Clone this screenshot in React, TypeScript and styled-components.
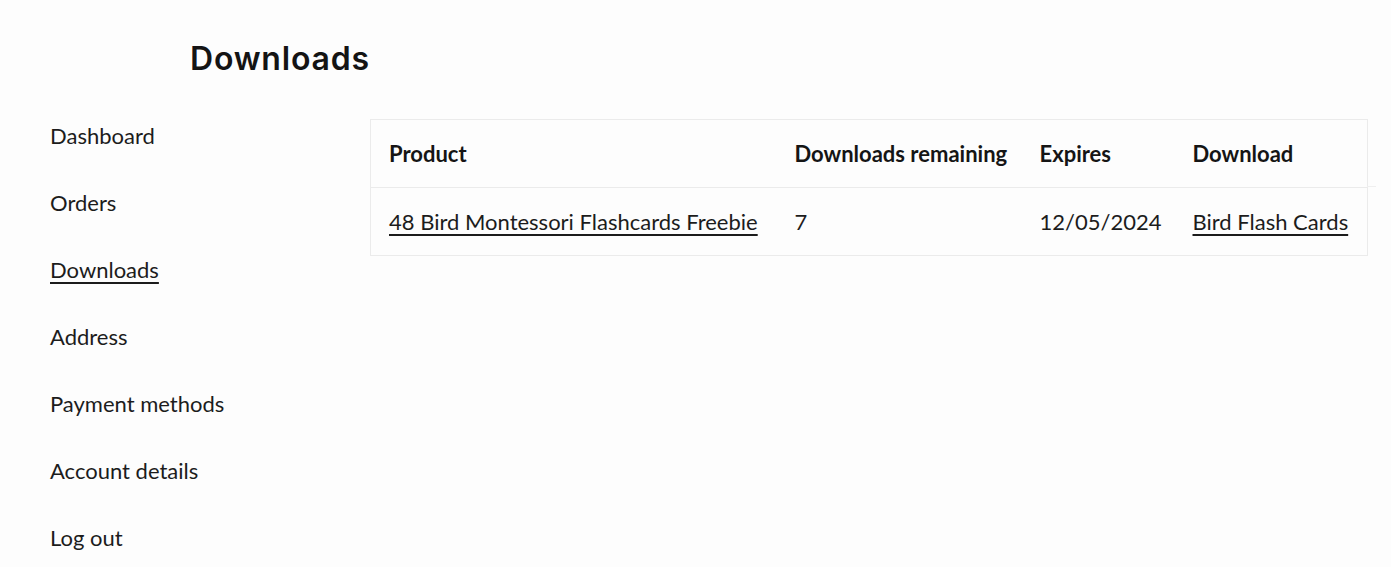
import React from "react";
import styled, { createGlobalStyle } from "styled-components";

const GlobalStyle = createGlobalStyle`
  html, body {
    margin: 0;
    padding: 0;
    background: #fdfdfd;
    color: #1c1c1c;
    font-family: Lato, "Open Sans", Arial, sans-serif;
  }
`;

const Page = styled.div`
  padding: 42px 24px 0 50px;
  width: 1391px;
  box-sizing: border-box;
`;

const Title = styled.h1`
  margin: 0 0 0 140px;
  font-family: Inter, "Noto Sans", sans-serif;
  font-weight: 600;
  font-size: 32px;
  line-height: 34px;
  letter-spacing: 0.8px;
  color: #141414;
`;

const Main = styled.div`
  display: flex;
  margin-top: 26px;
`;

const Sidebar = styled.nav`
  width: 320px;
  flex: none;
  display: flex;
  flex-direction: column;
`;

const NavItem = styled.a<{ $active?: boolean }>`
  display: block;
  font-size: 22px;
  line-height: 33px;
  padding: 17px 0;
  color: #1c1c1c;
  text-decoration: ${(p) => (p.$active ? "underline" : "none")};
  text-underline-offset: 4px;
  text-decoration-thickness: 1.5px;
`;

const Content = styled.div`
  flex: 1;
  padding-top: 17px;
`;

const TableWrap = styled.div`
  position: relative;
  width: 997px;
`;

const HeaderExtension = styled.div`
  position: absolute;
  left: 100%;
  top: 67px;
  width: 9px;
  height: 1px;
  background: #efefef;
`;

const Table = styled.table`
  width: 997px;
  table-layout: fixed;
  border-collapse: collapse;
  border: 1px solid #ebebeb;
  font-size: 22px;
`;

const HeadCell = styled.th`
  text-align: left;
  font-weight: 700;
  padding: 17px 18px;
  line-height: 33px;
  color: #151515;
  border-bottom: 1px solid #ebebeb;
  white-space: nowrap;
`;

const Cell = styled.td`
  padding: 17px 18px;
  line-height: 33px;
  color: #1c1c1c;
  white-space: nowrap;
`;

const Link = styled.a`
  color: #1c1c1c;
  text-decoration: underline;
  text-underline-offset: 4px;
  text-decoration-thickness: 1.5px;
`;

const navItems = [
  "Dashboard",
  "Orders",
  "Downloads",
  "Address",
  "Payment methods",
  "Account details",
  "Log out",
];

export default function App() {
  return (
    <>
      <GlobalStyle />
      <Page>
        <Title>Downloads</Title>
        <Main>
          <Sidebar>
            {navItems.map((n) => (
              <NavItem key={n} href="#" $active={n === "Downloads"}>
                {n}
              </NavItem>
            ))}
          </Sidebar>
          <Content>
            <TableWrap>
              <Table>
                <colgroup>
                  <col style={{ width: 406 }} />
                  <col style={{ width: 245 }} />
                  <col style={{ width: 153 }} />
                  <col style={{ width: 193 }} />
                </colgroup>
                <thead>
                  <tr>
                    <HeadCell>Product</HeadCell>
                    <HeadCell>Downloads remaining</HeadCell>
                    <HeadCell>Expires</HeadCell>
                    <HeadCell>Download</HeadCell>
                  </tr>
                </thead>
                <tbody>
                  <tr>
                    <Cell>
                      <Link href="#">48 Bird Montessori Flashcards Freebie</Link>
                    </Cell>
                    <Cell>7</Cell>
                    <Cell>12/05/2024</Cell>
                    <Cell>
                      <Link href="#">Bird Flash Cards</Link>
                    </Cell>
                  </tr>
                </tbody>
              </Table>
              <HeaderExtension />
            </TableWrap>
          </Content>
        </Main>
      </Page>
    </>
  );
}
